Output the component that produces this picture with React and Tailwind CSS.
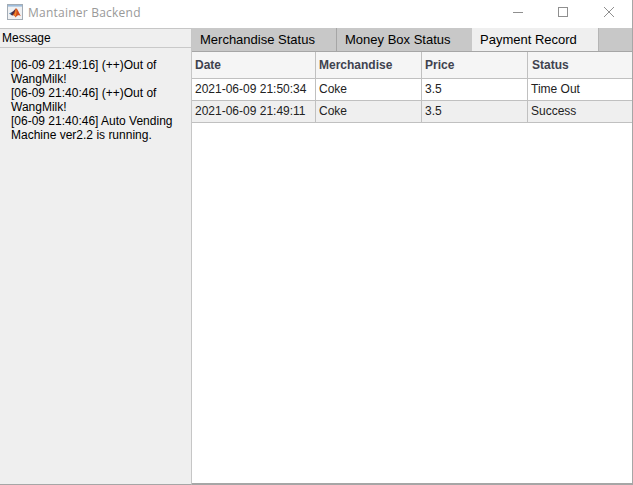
const messages = [
  '[06-09 21:49:16] (++)Out of WangMilk!',
  '[06-09 21:40:46] (++)Out of WangMilk!',
  '[06-09 21:40:46] Auto Vending Machine ver2.2 is running.',
];

const columns = ['Date', 'Merchandise', 'Price', 'Status'];

const records = [
  ['2021-06-09 21:50:34', 'Coke', '3.5', 'Time Out'],
  ['2021-06-09 21:49:11', 'Coke', '3.5', 'Success'],
];

function AppIcon() {
  return (
    <svg width="16" height="16" viewBox="0 0 16 16" className="shrink-0">
      <rect x="0.5" y="0.5" width="15" height="15" fill="#f0f1f3" stroke="#a3acb5" />
      <rect x="1" y="1" width="14" height="1.6" fill="#9dbcdb" />
      <path d="M2 9.4 5 7.9 7 9.2 5.2 11.4Z" fill="#3d78a8" />
      <path d="M5 7.9C6.8 7.4 7.6 5.2 9 4.2L7.6 9.8 5.2 11.4 4 10.4Z" fill="#4a2c40" />
      <path d="M9 4.2C10.8 4.8 12 9 14 12 12 10.8 10.6 11 8.4 13.4 7.8 11.6 6.8 11 5.2 11.4 7.6 9.8 8 5.8 9 4.2Z" fill="#cf4a1c" />
      <path d="M9 4.2C9.9 6.2 9.6 9.8 8.4 13 8 11.8 7.6 11.2 7 11 8.2 9.2 8.6 6.4 9 4.2Z" fill="#ef8a2a" />
    </svg>
  );
}

function TitleBar() {
  return (
    <header className="flex h-7 shrink-0 items-start justify-between bg-white pl-[7px] pr-[18px]">
      <div className="flex items-start gap-[5px] pt-1">
        <AppIcon />
        <h1 className="pt-px font-['Open_Sans',sans-serif] text-[12px] leading-4 tracking-[0.23px] text-[#999999]">
          Mantainer Backend
        </h1>
      </div>
      <div className="flex items-start pt-[7px] text-[#8f8f8f]">
        <svg width="10" height="11" viewBox="0 0 10 11" fill="none" stroke="currentColor" className="mr-[35px]">
          <path d="M0 5.5H10" />
        </svg>
        <svg width="10" height="10" viewBox="0 0 10 10" fill="none" stroke="currentColor" className="mr-9">
          <rect x="0.5" y="0.5" width="9" height="9" />
        </svg>
        <svg width="10" height="10" viewBox="0 0 10 10" fill="none" stroke="currentColor">
          <path d="M0 0 10 10M10 0 0 10" />
        </svg>
      </div>
    </header>
  );
}

function MessagePanel() {
  return (
    <aside className="flex w-48 shrink-0 flex-col border-r border-t border-b border-r-[#c6c6c6] border-t-[#c6c6c6] border-b-[#a6a6a6] bg-[#efefef]">
      <h2 className="h-[19px] border-b border-[#c9c9c9] pl-[2px] text-[12px] leading-[18px]">Message</h2>
      <div className="pl-[11px] pr-2 pt-[10px] text-[12px] leading-[14px]">
        {messages.map((text, i) => (
          <p key={i}>{text}</p>
        ))}
      </div>
    </aside>
  );
}

function Tabs() {
  return (
    <nav className="flex h-6 shrink-0 border-b border-[#a6a6a6] bg-[#c8c8c8] text-[13px] leading-[23px]">
      <div className="w-[145px] border-r border-[#a6a6a6] pl-2">Merchandise Status</div>
      <div className="w-[135px] pl-2">Money Box Status</div>
      <div className="w-[127px] border-r border-[#b5b5b5] bg-[#efefef] pl-2">Payment Record</div>
    </nav>
  );
}

function RecordTable() {
  return (
    <div className="text-[12px] text-[#222222]">
      <div className="grid h-[27px] grid-cols-[124px_106px_106px_1fr] border-b border-[#c0c0c0] bg-[#f5f5f5] font-bold leading-[26px] text-[#40434f]">
        {columns.map((name) => (
          <div key={name} className="border-r border-[#c0c0c0] pl-[3px] last:border-r-0 last:pl-1">{name}</div>
        ))}
      </div>
      {records.map((record) => (
        <div
          key={record[0]}
          className="grid h-[22px] grid-cols-[124px_106px_106px_1fr] border-b border-[#c0c0c0] leading-[21px] even:bg-white odd:bg-[#efefef]"
        >
          {record.map((value, i) => (
            <div key={i} className="whitespace-nowrap border-r border-[#c0c0c0] pl-[3px] last:border-r-0">{value}</div>
          ))}
        </div>
      ))}
    </div>
  );
}

export default function App() {
  return (
    <div className="flex h-[485px] w-[633px] flex-col overflow-hidden border-r border-[#a6a6a6] bg-white font-['Liberation_Sans',Arial,sans-serif] text-black">
      <TitleBar />
      <div className="flex min-h-0 flex-1">
        <MessagePanel />
        <main className="flex min-w-0 flex-1 flex-col border-b-2 border-[#a6a6a6]">
          <Tabs />
          <RecordTable />
        </main>
      </div>
    </div>
  );
}
